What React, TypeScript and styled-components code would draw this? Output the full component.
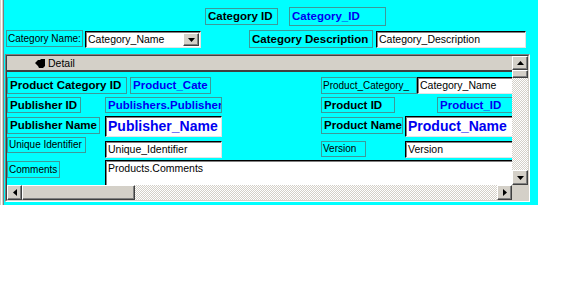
import styled, { createGlobalStyle, css } from "styled-components";

const CYAN = "#00ffff";
const FACE = "#d4d0c8";
const EDGE = "#3c9a9a";
const BLUE = "#0000f0";

const GlobalStyle = createGlobalStyle`
  html, body {
    margin: 0;
    padding: 0;
    background: #fff;
  }
  body {
    font-family: "Liberation Sans", Arial, sans-serif;
  }
`;

type BoxProps = { $w: number; $h: number; $ml?: number; $mt?: number };

const boxCss = css<BoxProps>`
  flex: none;
  box-sizing: border-box;
  width: ${(p) => p.$w}px;
  height: ${(p) => p.$h}px;
  margin-left: ${(p) => p.$ml ?? 0}px;
  margin-top: ${(p) => p.$mt ?? 0}px;
  overflow: hidden;
  white-space: nowrap;
`;

const Form = styled.div`
  width: 538px;
  height: 205px;
  display: flex;
  flex-direction: column;
  overflow: hidden;
  background: linear-gradient(
      to right,
      ${FACE} 0 1px,
      #fff 1px 2px,
      ${FACE} 2px 3px,
      #808080 3px 4px,
      transparent 4px
    ),
    ${CYAN};
`;

const HeaderRow = styled.div<{ $top: number; $h: number }>`
  display: flex;
  align-items: flex-start;
  margin-top: ${(p) => p.$top}px;
  height: ${(p) => p.$h}px;
  flex: none;
`;

const Label = styled.div<BoxProps & { $bold?: boolean }>`
  ${boxCss}
  border: 1px solid ${EDGE};
  padding-left: ${(p) => (p.$bold ? 2 : 1)}px;
  color: #000;
  font-size: ${(p) => (p.$bold ? 11.5 : 10)}px;
  font-weight: ${(p) => (p.$bold ? 700 : 400)};
  line-height: ${(p) => p.$h - 2}px;
`;

const Field = styled.div<BoxProps>`
  ${boxCss}
  border: 1px solid ${EDGE};
  padding-left: 2px;
  color: ${BLUE};
  font-size: 11.5px;
  font-weight: 700;
  line-height: ${(p) => p.$h - 2}px;
`;

const TextBox = styled.div<BoxProps & { $big?: boolean }>`
  ${boxCss}
  background: #fff;
  border: 1px solid;
  border-color: #000 #e4e4e4 #e4e4e4 #000;
  box-shadow: inset 1px 1px #808080;
  padding: 0 2px 0 2px;
  color: ${(p) => (p.$big ? BLUE : "#000")};
  font-size: ${(p) => (p.$big ? 14 : 10.5)}px;
  font-weight: ${(p) => (p.$big ? 700 : 400)};
  line-height: ${(p) => (p.$big ? p.$h - 2 : 14)}px;
`;

const Combo = styled.div<BoxProps>`
  ${boxCss}
  display: flex;
  align-items: stretch;
  background: #fff;
  border: 1px solid;
  border-color: #000 #e4e4e4 #e4e4e4 #000;
  box-shadow: inset 1px 1px #808080;
  padding: 1px 1px 1px 2px;
  font-size: 10.5px;
  line-height: 13px;
`;

const ComboText = styled.span`
  flex: 1;
  overflow: hidden;
`;

const Btn = styled.div<{ $w: number; $h?: number }>`
  flex: none;
  box-sizing: border-box;
  width: ${(p) => p.$w}px;
  ${(p) => (p.$h ? `height: ${p.$h}px;` : "")}
  background: ${FACE};
  border: 1px solid;
  border-color: #fff #404040 #404040 #fff;
  box-shadow: inset -1px -1px #808080;
  display: flex;
  align-items: center;
  justify-content: center;
`;

const Subform = styled.div`
  flex: none;
  margin: 6px 0 0 5px;
  width: 525px;
  height: 148px;
  box-sizing: border-box;
  border: 1px solid;
  border-color: #808080 #fff #fff #808080;
`;

const SubformInner = styled.div`
  height: 100%;
  box-sizing: border-box;
  border: 1px solid;
  border-color: #404040 ${FACE} ${FACE} #404040;
  display: grid;
  grid-template-columns: 1fr 16px;
  grid-template-rows: 1fr 15px;
`;

const Main = styled.div`
  display: flex;
  flex-direction: column;
  overflow: hidden;
  min-width: 0;
`;

const DetailBar = styled.div`
  flex: none;
  height: 14px;
  background: ${FACE};
  border-bottom: 2px solid #404040;
  display: flex;
  align-items: center;
  gap: 3px;
  padding-left: 28px;
  font-size: 10.5px;
  color: #000;
`;

const Content = styled.div`
  flex: 1;
  background: ${CYAN};
  overflow: hidden;
`;

const Row = styled.div<{ $mt: number; $h: number }>`
  display: flex;
  align-items: flex-start;
  margin-top: ${(p) => p.$mt}px;
  height: ${(p) => p.$h}px;
`;

const LeftCell = styled.div`
  flex: none;
  width: 314px;
  display: flex;
  align-items: flex-start;
`;

const RightCell = styled.div`
  flex: none;
  display: flex;
  align-items: flex-start;
`;

const Checker = css`
  background: repeating-conic-gradient(${FACE} 0 25%, #fff 0 50%) 0 0 / 2px 2px;
`;

const VScroll = styled.div`
  grid-column: 2;
  grid-row: 1;
  display: flex;
  flex-direction: column;
  ${Checker}
`;

const HScroll = styled.div`
  grid-column: 1;
  grid-row: 2;
  display: flex;
  ${Checker}
`;

const Track = styled.div`
  flex: 1;
`;

const Corner = styled.div`
  grid-column: 2;
  grid-row: 2;
  background: ${FACE};
`;

const Arrow = ({ dir }: { dir: "up" | "down" | "left" | "right" }) => {
  const pts = {
    up: "0,4 3.5,0 7,4",
    down: "0,0 7,0 3.5,4",
    left: "4,0 4,7 0,3.5",
    right: "0,0 0,7 4,3.5",
  }[dir];
  const vertical = dir === "up" || dir === "down";
  return (
    <svg width={vertical ? 7 : 4} height={vertical ? 4 : 7} viewBox={vertical ? "0 0 7 4" : "0 0 4 7"}>
      <polygon points={pts} fill="#000" />
    </svg>
  );
};

// little pointing-hand marker drawn on the section bar
const SectionIcon = () => (
  <svg width="10" height="9" viewBox="0 0 10 9">
    <path d="M0 4 L3 1 L5 1 L6 0 L10 0 L10 7 L8 9 L4 9 L3 7 Z" fill="#000" />
  </svg>
);

export default function App() {
  return (
    <>
      <GlobalStyle />
      <Form>
        <HeaderRow $top={7} $h={19}>
          <Label $bold $w={73} $h={17} $ml={205} $mt={1}>
            Category ID
          </Label>
          <Field $w={97} $h={19} $ml={11}>
            Category_ID
          </Field>
        </HeaderRow>
        <HeaderRow $top={4} $h={18}>
          <Label $w={77} $h={17} $ml={6}>
            Category Name:
          </Label>
          <Combo $w={116} $h={17} $ml={2} $mt={1}>
            <ComboText>Category_Name</ComboText>
            <Btn $w={16}>
              <Arrow dir="down" />
            </Btn>
          </Combo>
          <Label $bold $w={124} $h={18} $ml={48}>
            Category Description
          </Label>
          <TextBox $w={150} $h={17} $ml={3} $mt={1}>
            Category_Description
          </TextBox>
        </HeaderRow>

        <Subform>
          <SubformInner>
            <Main>
              <DetailBar>
                <SectionIcon />
                Detail
              </DetailBar>
              <Content>
                <Row $mt={5} $h={17}>
                  <LeftCell>
                    <Label $bold $w={120} $h={17}>
                      Product Category ID
                    </Label>
                    <Field $w={81} $h={17} $ml={3}>
                      Product_Cate
                    </Field>
                  </LeftCell>
                  <RightCell>
                    <Label $w={96} $h={17}>
                      Product_Category_
                    </Label>
                    <TextBox $w={110} $h={17}>
                      Category_Name
                    </TextBox>
                  </RightCell>
                </Row>
                <Row $mt={3} $h={16}>
                  <LeftCell>
                    <Label $bold $w={74} $h={16}>
                      Publisher ID
                    </Label>
                    <Field $w={117} $h={16} $ml={24}>
                      Publishers.Publisher
                    </Field>
                  </LeftCell>
                  <RightCell>
                    <Label $bold $w={74} $h={16}>
                      Product ID
                    </Label>
                    <Field $w={90} $h={16} $ml={42}>
                      Product_ID
                    </Field>
                  </RightCell>
                </Row>
                <Row $mt={3} $h={21}>
                  <LeftCell>
                    <Label $bold $w={93} $h={17} $mt={1}>
                      Publisher Name
                    </Label>
                    <TextBox $big $w={117} $h={21} $ml={5}>
                      Publisher_Name
                    </TextBox>
                  </LeftCell>
                  <RightCell>
                    <Label $bold $w={82} $h={17} $mt={1}>
                      Product Name
                    </Label>
                    <TextBox $big $w={115} $h={21} $ml={2}>
                      Product_Name
                    </TextBox>
                  </RightCell>
                </Row>
                <Row $mt={0} $h={21}>
                  <LeftCell>
                    <Label $w={79} $h={16}>
                      Unique Identifier
                    </Label>
                    <TextBox $w={117} $h={17} $ml={19} $mt={4}>
                      Unique_Identifier
                    </TextBox>
                  </LeftCell>
                  <RightCell>
                    <Label $w={45} $h={16} $mt={4}>
                      Version
                    </Label>
                    <TextBox $w={115} $h={17} $ml={39} $mt={4}>
                      Version
                    </TextBox>
                  </RightCell>
                </Row>
                <Row $mt={2} $h={40}>
                  <Label $w={53} $h={17} $mt={1}>
                    Comments
                  </Label>
                  <TextBox $w={420} $h={40} $ml={45}>
                    Products.Comments
                  </TextBox>
                </Row>
              </Content>
            </Main>
            <VScroll>
              <Btn $w={16} $h={14}>
                <Arrow dir="up" />
              </Btn>
              <Btn $w={16} $h={8} />
              <Track />
              <Btn $w={16} $h={15}>
                <Arrow dir="down" />
              </Btn>
            </VScroll>
            <HScroll>
              <Btn $w={15}>
                <Arrow dir="left" />
              </Btn>
              <Btn $w={113} />
              <Track />
              <Btn $w={15}>
                <Arrow dir="right" />
              </Btn>
            </HScroll>
            <Corner />
          </SubformInner>
        </Subform>
      </Form>
    </>
  );
}
